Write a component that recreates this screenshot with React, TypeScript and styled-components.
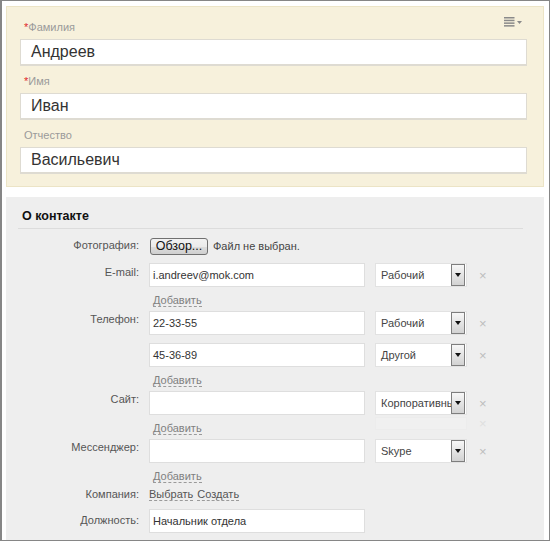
import React from "react";
import styled, { createGlobalStyle } from "styled-components";

const Global = createGlobalStyle`
  html, body { margin: 0; padding: 0; background: #fff; }
  body { font-family: "Liberation Sans", Arial, sans-serif; }
  * { box-sizing: border-box; }
`;

const Frame = styled.div`
  width: 550px;
  height: 541px;
  border: 1px solid #868686;
  border-left-width: 2px;
  padding: 5px 5px 0 4px;
  overflow: hidden;
  background: #fff;
  display: flex;
  flex-direction: column;
`;

const NamePanel = styled.div`
  position: relative;
  background: #f7f1dc;
  border: 1px solid #ece4c6;
  padding: 13px 16px 12px 13px;
  display: flex;
  flex-direction: column;
  gap: 8px;
`;

const MenuButton = styled.div`
  position: absolute;
  top: 10px;
  right: 21px;
  display: flex;
  align-items: center;
  gap: 2px;
`;

const Field = styled.div`
  display: flex;
  flex-direction: column;
  gap: 5px;
`;

const FieldLabel = styled.div`
  font-size: 11px;
  line-height: 14px;
  color: #9a9a9a;
  padding-left: 4px;
`;

const Star = styled.span`
  color: #e0272a;
`;

const BigInput = styled.div`
  height: 27px;
  background: #fff;
  border: 1px solid #dedbd2;
  border-bottom-width: 2px;
  font-size: 16px;
  line-height: 24px;
  color: #333;
  padding-left: 10px;
`;

const Section = styled.div`
  margin-top: 10px;
  flex: 1;
  background: #eeeeee;
  padding: 0 21px 0 12px;
`;

const SectionTitle = styled.div`
  font-size: 12.5px;
  font-weight: bold;
  color: #111;
  padding: 12px 4px 5px;
  line-height: 14px;
  border-bottom: 1px solid #dcdcdc;
`;

const Form = styled.div`
  display: grid;
  grid-template-columns: 121px 1fr;
  column-gap: 10px;
  row-gap: 8px;
  padding-top: 8px;
  margin-left: -12px;
  padding-left: 12px;
`;

const Label = styled.div<{ $pt?: number }>`
  font-size: 11px;
  line-height: 14px;
  color: #555;
  text-align: right;
  padding-top: ${(p) => p.$pt ?? 1}px;
`;

const Content = styled.div`
  display: flex;
  flex-direction: column;
  gap: 8px;
`;

const Group = styled.div`
  display: flex;
  flex-direction: column;
`;

const Line = styled.div`
  display: flex;
  align-items: center;
  height: 24px;
`;

const TextInput = styled.div`
  width: 216px;
  height: 24px;
  background: #fff;
  border: 1px solid #dedede;
  font-size: 11px;
  line-height: 22px;
  color: #333;
  padding-left: 3px;
`;

const Select = styled.div<{ $ghost?: boolean }>`
  position: relative;
  margin-left: 10px;
  width: 92px;
  height: ${(p) => (p.$ghost ? 13 : 24)}px;
  background: #fff;
  border: 1px solid #e2e2e2;
  font-size: 11px;
  line-height: 22px;
  color: #444;
  padding-left: 5px;
  white-space: nowrap;
  overflow: hidden;
  opacity: ${(p) => (p.$ghost ? 0.15 : 1)};
`;

const SelectArrow = styled.div`
  position: absolute;
  right: 1px;
  top: 0;
  width: 14px;
  height: 22px;
  border: 1px solid #7e7e7e;
  background: linear-gradient(#f7f7f7, #d2d2d2);
  display: flex;
  align-items: center;
  justify-content: center;
  &::after {
    content: "";
    border-left: 3px solid transparent;
    border-right: 3px solid transparent;
    border-top: 4px solid #111;
  }
`;

const Remove = styled.span<{ $ghost?: boolean }>`
  margin-left: 12px;
  font-size: 13px;
  line-height: 13px;
  color: #bdbdbd;
  opacity: ${(p) => (p.$ghost ? 0.3 : 1)};
`;

const AddRow = styled.div`
  height: 16px;
  display: flex;
  align-items: flex-start;
  padding-top: 3px;
`;

const AddCell = styled.div`
  width: 216px;
  padding-left: 4px;
`;

const DashLink = styled.span<{ $color?: string }>`
  font-size: 11px;
  line-height: 12px;
  color: ${(p) => p.$color ?? "#808080"};
  border-bottom: 1px dashed #9a9a9a;
  cursor: pointer;
`;

const LinkRow = styled.div`
  display: flex;
  gap: 4px;
  height: 14px;
  align-items: flex-start;
  padding-top: 1px;
`;

const FileRow = styled.div`
  display: flex;
  align-items: center;
  height: 18px;
`;

const BrowseButton = styled.div`
  margin-left: 1px;
  height: 17px;
  width: 58px;
  border: 1px solid #707070;
  border-radius: 3px;
  background: linear-gradient(#f2f2f2 0%, #ebebeb 50%, #dddddd 51%, #cfcfcf 100%);
  font-size: 12.5px;
  line-height: 15px;
  color: #111;
  text-align: center;
`;

const FileNote = styled.span`
  margin-left: 5px;
  font-size: 11px;
  color: #444;
`;

const GhostWrap = styled.div`
  display: flex;
  align-items: center;
  margin-top: -1px;
`;

function MenuIcon() {
  return (
    <MenuButton>
      <svg width="11" height="10" viewBox="0 0 11 10">
        <rect x="0" y="0" width="10.5" height="1.5" fill="#8a8a8a" />
        <rect x="0" y="2.7" width="10.5" height="1.5" fill="#8a8a8a" />
        <rect x="0" y="5.4" width="10.5" height="1.5" fill="#8a8a8a" />
        <rect x="0" y="8.1" width="10.5" height="1.5" fill="#8a8a8a" />
      </svg>
      <svg width="5" height="3" viewBox="0 0 5 3">
        <path d="M0 0 L5 0 L2.5 3 Z" fill="#8a8a8a" />
      </svg>
    </MenuButton>
  );
}

function Entry({ value, type }: { value: string; type: string }) {
  return (
    <Line>
      <TextInput>{value}</TextInput>
      <Select>
        {type}
        <SelectArrow />
      </Select>
      <Remove>×</Remove>
    </Line>
  );
}

function Add({ ghost }: { ghost?: boolean }) {
  return (
    <AddRow>
      <AddCell>
        <DashLink>Добавить</DashLink>
      </AddCell>
      {ghost && (
        <GhostWrap>
          <Select $ghost />
          <Remove $ghost>×</Remove>
        </GhostWrap>
      )}
    </AddRow>
  );
}

export default function App() {
  return (
    <>
      <Global />
      <Frame>
        <NamePanel>
          <MenuIcon />
          <Field>
            <FieldLabel>
              <Star>*</Star>Фамилия
            </FieldLabel>
            <BigInput>Андреев</BigInput>
          </Field>
          <Field>
            <FieldLabel>
              <Star>*</Star>Имя
            </FieldLabel>
            <BigInput>Иван</BigInput>
          </Field>
          <Field>
            <FieldLabel>Отчество</FieldLabel>
            <BigInput>Васильевич</BigInput>
          </Field>
        </NamePanel>
        <Section>
          <SectionTitle>О контакте</SectionTitle>
          <Form>
            <Label $pt={1}>Фотография:</Label>
            <FileRow>
              <BrowseButton>Обзор...</BrowseButton>
              <FileNote>Файл не выбран.</FileNote>
            </FileRow>

            <Label $pt={2}>E-mail:</Label>
            <Group>
              <Entry value="i.andreev@mok.com" type="Рабочий" />
              <Add />
            </Group>

            <Label>Телефон:</Label>
            <Group>
              <Content>
                <Entry value="22-33-55" type="Рабочий" />
                <Entry value="45-36-89" type="Другой" />
              </Content>
              <Add />
            </Group>

            <Label>Сайт:</Label>
            <Group>
              <Entry value="" type="Корпоративный" />
              <Add ghost />
            </Group>

            <Label>Мессенджер:</Label>
            <Group>
              <Entry value="" type="Skype" />
              <Add />
            </Group>

            <Label $pt={0}>Компания:</Label>
            <LinkRow>
              <DashLink $color="#555">Выбрать</DashLink>
              <DashLink $color="#555">Создать</DashLink>
            </LinkRow>

            <Label $pt={4}>Должность:</Label>
            <Group>
              <TextInput>Начальник отдела</TextInput>
            </Group>
          </Form>
        </Section>
      </Frame>
    </>
  );
}
